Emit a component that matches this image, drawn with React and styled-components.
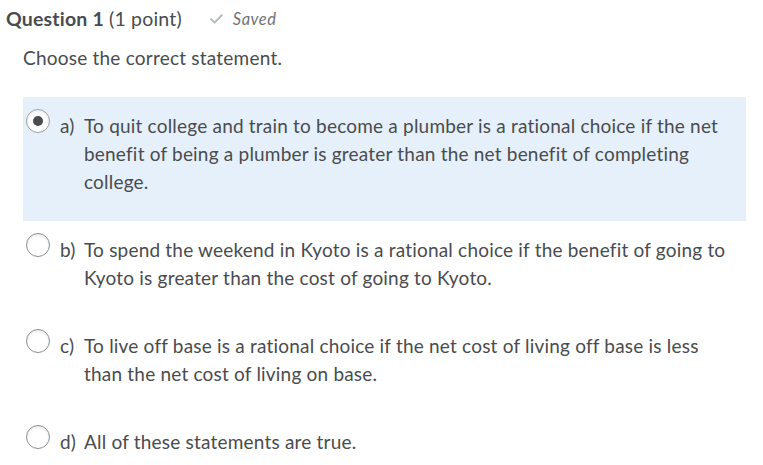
import React from "react";
import styled, { createGlobalStyle } from "styled-components";

const Global = createGlobalStyle`
  html, body { margin: 0; padding: 0; background: #ffffff; }
  body {
    font-family: Lato, "Noto Sans", sans-serif;
    color: #494c4e;
    font-variant-ligatures: none;
    font-feature-settings: "liga" 0;
  }
`;

const Page = styled.div`
  width: 763px;
  padding: 0 17px 0 6px;
  box-sizing: border-box;
`;

const Header = styled.div`
  display: flex;
  align-items: center;
  height: 37px;
`;

const Title = styled.h2`
  margin: 0;
  font-size: 19.5px;
  font-weight: 400;
  line-height: 37px;
  letter-spacing: 0.18px;
  color: #494c4e;
  b { font-weight: 700; }
`;

const Saved = styled.span`
  display: inline-flex;
  align-items: center;
  gap: 10px;
  margin-left: 28px;
  font-size: 16.5px;
  font-style: italic;
  letter-spacing: 0.5px;
  color: #6e7376;
`;

const Prompt = styled.p`
  margin: 7px 0 0 17px;
  font-size: 19px;
  line-height: 28px;
  letter-spacing: 0.22px;
`;

const Choices = styled.div`
  margin: 25px 0 0 17px;
  display: flex;
  flex-direction: column;
`;

const Row = styled.label`
  display: flex;
  align-items: flex-start;
  padding: 15px 12px 25px 3px;
  background: ${(p) => (p.$selected ? "#e6f0fb" : "transparent")};
  font-size: 19px;
  line-height: 28px;
  letter-spacing: 0.2px;
`;

const Radio = styled.span`
  flex: 0 0 auto;
  width: 24px;
  height: 24px;
  box-sizing: border-box;
  border-radius: 50%;
  border: 1px solid ${(p) => (p.$checked ? "#9aa0a4" : "#8a9094")};
  background: #ffffff;
  box-shadow: inset 0 2px 3px rgba(0, 0, 0, 0.08);
  margin-top: -3px;
  display: flex;
  align-items: center;
  justify-content: center;
  &::after {
    content: "";
    display: ${(p) => (p.$checked ? "block" : "none")};
    width: 10px;
    height: 10px;
    border-radius: 50%;
    background: #494c4e;
  }
`;

const Letter = styled.span`
  flex: 0 0 24px;
  margin-left: 10px;
`;

const Text = styled.span`
  flex: 1 1 auto;
`;

const choices = [
  {
    l: "a)",
    t: "To quit college and train to become a plumber is a rational choice if the net benefit of being a plumber is greater than the net benefit of completing college.",
    s: true,
  },
  {
    l: "b)",
    t: "To spend the weekend in Kyoto is a rational choice if the benefit of going to Kyoto is greater than the cost of going to Kyoto.",
  },
  {
    l: "c)",
    t: "To live off base is a rational choice if the net cost of living off base is less than the net cost of living on base.",
  },
  { l: "d)", t: "All of these statements are true." },
];

const Check = () => (
  <svg width="13" height="10" viewBox="0 0 13 10" fill="none">
    <path d="M1.2 5.2 L4.6 8.6 L11.8 1.2" stroke="#b3babe" strokeWidth="2" strokeLinecap="round" strokeLinejoin="round" />
  </svg>
);

export default function App() {
  return (
    <Page>
      <Global />
      <Header>
        <Title>
          <b>Question 1</b> (1 point)
        </Title>
        <Saved>
          <Check />
          Saved
        </Saved>
      </Header>
      <Prompt>Choose the correct statement.</Prompt>
      <Choices>
        {choices.map((c) => (
          <Row key={c.l} $selected={c.s}>
            <Radio $checked={c.s} />
            <Letter>{c.l}</Letter>
            <Text>{c.t}</Text>
          </Row>
        ))}
      </Choices>
    </Page>
  );
}
